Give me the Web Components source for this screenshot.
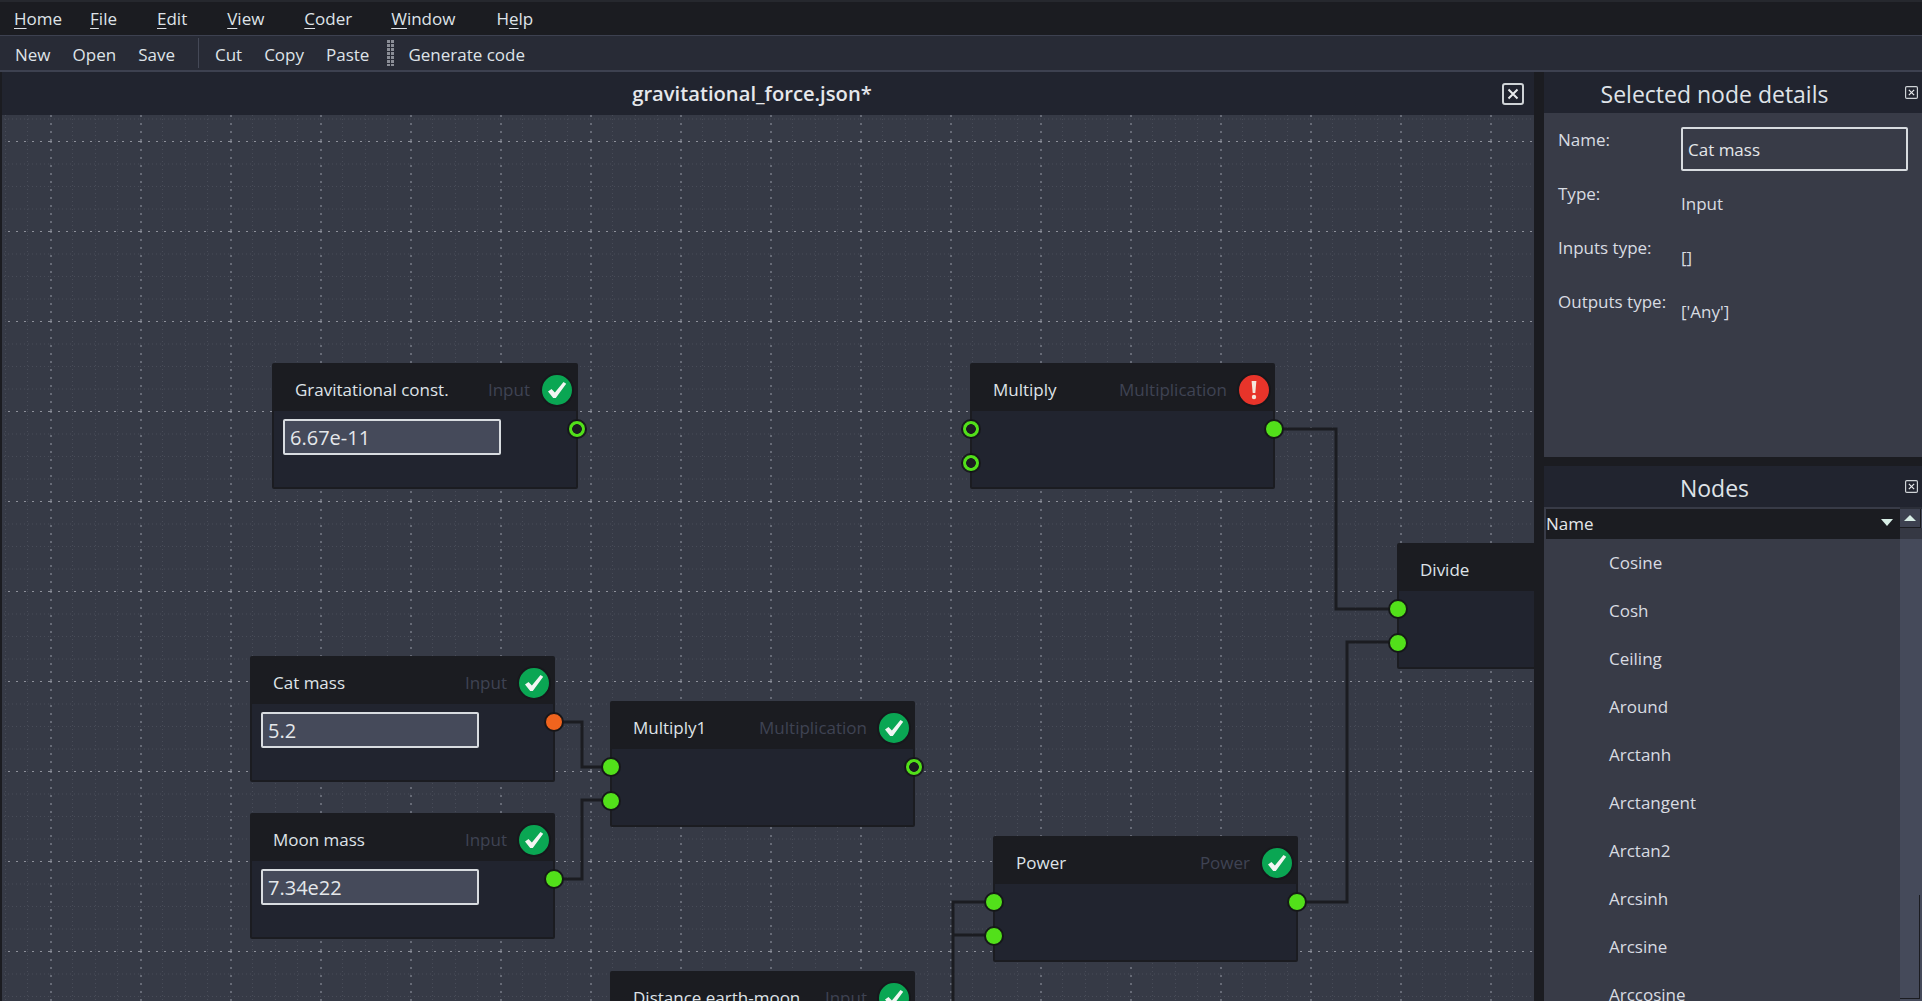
<!DOCTYPE html>
<html lang="en">
<head>
<meta charset="UTF-8">
<title>gravitational_force.json</title>
<style>
  html, body { margin: 0; height: 100%; overflow: hidden; background: #1b1c21; }
  body {
    display: flex;
    flex-direction: column;
    font-family: "Open Sans", "Liberation Sans", sans-serif;
    font-size: 17px;
    color: #dfe3e8;
  }
  u { text-underline-offset: 3px; }
</style>
</head>
<body>
  <app-menu>
    <span style="margin-right:-12px"><u>H</u>ome</span>
    <span><u>F</u>ile</span>
    <span><u>E</u>dit</span>
    <span><u>V</u>iew</span>
    <span><u>C</u>oder</span>
    <span style="margin-left:-1px"><u>W</u>indow</span>
    <span style="margin-left:1px">H<u>e</u>lp</span>
  </app-menu>
  <tool-bar>
    <span>New</span>
    <span>Open</span>
    <span>Save</span>
    <i class="sep"></i>
    <span>Cut</span>
    <span>Copy</span>
    <span>Paste</span>
    <i class="grip"></i>
    <span>Generate code</span>
  </tool-bar>

  <app-main>
    <editor-pane name="gravitational_force.json*">
      <flow-node x="270" y="248" style="width:306px" name="Gravitational const." type="Input" status="ok">
        <value-field>6.67e-11</value-field>
        <node-port side="right" row="0" kind="hollow"></node-port>
      </flow-node>
      <flow-node x="968" y="248" name="Multiply" type="Multiplication" status="error">
        <node-port side="left" row="0" kind="hollow"></node-port>
        <node-port side="left" row="1" kind="hollow"></node-port>
        <node-port side="right" row="0"></node-port>
      </flow-node>
      <flow-node x="1395" y="428" name="Divide">
        <node-port side="left" row="0"></node-port>
        <node-port side="left" row="1"></node-port>
      </flow-node>
      <flow-node x="248" y="541" name="Cat mass" type="Input" status="ok">
        <value-field>5.2</value-field>
        <node-port side="right" row="0" kind="orange"></node-port>
      </flow-node>
      <flow-node x="608" y="586" name="Multiply1" type="Multiplication" status="ok">
        <node-port side="left" row="0"></node-port>
        <node-port side="left" row="1"></node-port>
        <node-port side="right" row="0" kind="hollow"></node-port>
      </flow-node>
      <flow-node x="248" y="698" name="Moon mass" type="Input" status="ok">
        <value-field>7.34e22</value-field>
        <node-port side="right" row="0"></node-port>
      </flow-node>
      <flow-node x="991" y="721" name="Power" type="Power" status="ok">
        <node-port side="left" row="0"></node-port>
        <node-port side="left" row="1"></node-port>
        <node-port side="right" row="0"></node-port>
      </flow-node>
      <flow-node x="608" y="856" name="Distance earth-moon" type="Input" status="ok"></flow-node>
    </editor-pane>

    <side-dock>
      <dock-panel name="Selected node details" style="height:385px">
        <node-details>
          <span>Name:</span><value-field plain>Cat mass</value-field>
          <span>Type:</span><b>Input</b>
          <span>Inputs type:</span><b>[]</b>
          <span>Outputs type:</span><b>['Any']</b>
        </node-details>
      </dock-panel>
      <dock-panel name="Nodes" style="flex:1;min-height:0">
        <node-list>
          <span>Cosine</span>
          <span>Cosh</span>
          <span>Ceiling</span>
          <span>Around</span>
          <span>Arctanh</span>
          <span>Arctangent</span>
          <span>Arctan2</span>
          <span>Arcsinh</span>
          <span>Arcsine</span>
          <span>Arccosine</span>
        </node-list>
      </dock-panel>
    </side-dock>
  </app-main>

<script>
  function shadow(el, html) {
    el.attachShadow({ mode: 'open' }).innerHTML = html;
  }

  class AppMenu extends HTMLElement {
    constructor() {
      super();
      shadow(this, `<style>
        :host { display: flex; gap: 40px; align-items: center; height: 33px; padding: 0 0 0 14px;
                background: #1b1c21; border-top: 2px solid #26282e; border-bottom: 1px solid #3d4150; }
      </style><slot></slot>`);
    }
  }

  class ToolBar extends HTMLElement {
    constructor() {
      super();
      shadow(this, `<style>
        :host { display: flex; gap: 22px; align-items: center; height: 32px; padding: 2px 0 0 15px;
                background: #282b36; border-bottom: 2px solid #3d4150; }
        ::slotted(.sep) { width: 1px; height: 30px; margin: -2px -6px 0 1px; background: #454957; }
        ::slotted(.grip) { width: 8px; height: 26px; margin: -2px -9px 0 -4px;
          background: radial-gradient(circle at 1.5px 1.5px, #8b8e97 1.5px, transparent 1.6px) 0 0 / 4px 4px; }
      </style><slot></slot>`);
    }
  }

  class AppMain extends HTMLElement {
    constructor() {
      super();
      shadow(this, `<style>
        :host { display: flex; flex: 1; min-height: 0; gap: 10px; background: #1b1c21; }
      </style><slot></slot>`);
    }
  }

  class EditorPane extends HTMLElement {
    constructor() {
      super();
      shadow(this, `<style>
        :host { display: flex; flex-direction: column; width: 1532px; margin-left: 2px; min-height: 0; }
        header { display: flex; align-items: center; height: 43px; flex: none; background: #21242f; padding-right: 10px; }
        h1 { flex: 1; margin: -2px 0 0; text-align: center; font-size: 20.2px; font-weight: 600; color: #e6e8ec; }
        .canvas { position: relative; flex: 1; overflow: hidden; background: #363a46; }
        svg { position: absolute; left: 0; top: 0; width: 100%; height: 100%; }
      </style>
      <header><h1></h1><close-button size="22"></close-button></header>
      <div class="canvas">
        <svg>
          <defs>
            <pattern id="grid" width="90" height="90" patternUnits="userSpaceOnUse" patternTransform="translate(48 26)">
              <g stroke="#484c58" fill="none">
                <path d="M22.5 0V90M45.5 0V90M67.5 0V90" stroke-dasharray="1 3"/>
                <path d="M0 23H90M0 45.5H90M0 68H90" stroke-dasharray="1 3"/>
              </g>
              <path d="M1 0V90" stroke="#666a76" stroke-width="2" stroke-dasharray="2 6" fill="none"/>
              <path d="M0 .5H90" stroke="#8e919b" stroke-dasharray="2 6" fill="none"/>
            </pattern>
          </defs>
          <rect width="100%" height="100%" fill="url(#grid)"/>
          <path fill="none" stroke="#1b1c21" stroke-width="3"
            d="M1272 314H1334V494H1396M1294 787H1345V527H1396M552 607H580V652H609M552 764H580V685H609M991 787H951V886M991 820H951"/>
        </svg>
        <slot></slot>
      </div>`);
    }
    connectedCallback() {
      this.shadowRoot.querySelector('h1').textContent = this.getAttribute('name');
    }
  }

  class CloseButton extends HTMLElement {
    constructor() {
      super();
      shadow(this, `<style>
        :host { display: block; flex: none; line-height: 0; }
        svg { display: block; }
      </style><svg viewBox="0 0 22 22" fill="none">
        <rect x="1" y="1" width="20" height="20" rx="2" stroke="#cfd3d6" stroke-width="2" fill="#21242f"/>
        <path d="M6.5 6.5l9 9M15.5 6.5l-9 9" stroke="#e8eaec" stroke-width="2"/>
      </svg>`);
    }
    connectedCallback() {
      const s = this.getAttribute('size') || 13;
      const svg = this.shadowRoot.querySelector('svg');
      svg.setAttribute('width', s);
      svg.setAttribute('height', s);
    }
  }

  class FlowNode extends HTMLElement {
    constructor() {
      super();
      shadow(this, `<style>
        :host { position: absolute; display: block; box-sizing: border-box; width: 305px; height: 126px;
                background: #21242f; border: 2px solid #1b1c21; border-radius: 2px; }
        header { display: flex; align-items: center; box-sizing: border-box; height: 46px; background: #1b1c21;
                 padding: 3px 2px 0 21px; }
        .name { flex: 1; white-space: nowrap; color: #dfe3e8; }
        .type { color: #3f4353; margin-right: 10px; }
        .body { padding: 8px 0 0 9px; }
      </style>
      <header><span class="name"></span><span class="type"></span><span class="badge"></span></header>
      <div class="body"><slot></slot></div>`);
    }
    connectedCallback() {
      this.style.left = this.getAttribute('x') + 'px';
      this.style.top = this.getAttribute('y') + 'px';
      const root = this.shadowRoot;
      root.querySelector('.name').textContent = this.getAttribute('name');
      if (this.hasAttribute('type')) root.querySelector('.type').textContent = this.getAttribute('type');
      if (this.hasAttribute('status')) {
        const badge = document.createElement('status-badge');
        badge.setAttribute('status', this.getAttribute('status'));
        root.querySelector('.badge').replaceWith(badge);
      }
    }
  }

  class StatusBadge extends HTMLElement {
    constructor() {
      super();
      shadow(this, `<style>
        :host { display: block; flex: none; width: 34px; height: 34px; }
        svg { display: block; }
      </style><svg width="34" height="34" viewBox="0 0 34 34"></svg>`);
    }
    connectedCallback() {
      const svg = this.shadowRoot.querySelector('svg');
      if (this.getAttribute('status') === 'error') {
        svg.innerHTML = `<circle cx="17" cy="17" r="16" fill="#e8342a" stroke="#17181c" stroke-width="2"/>
          <path d="M14.6 8h4.8l-1.1 12h-2.6z" fill="#f4e6dc"/><circle cx="17" cy="24" r="2.2" fill="#f4e6dc"/>`;
      } else {
        svg.innerHTML = `<circle cx="17" cy="17" r="16" fill="#0aa653" stroke="#17181c" stroke-width="2"/>
          <path d="M8 18.5l3.5-2.6 3.4 3.6 8.6-10.5 2.7 1.8-10.4 14.2h-2.6z" fill="#f2f5f3"/>`;
      }
    }
  }

  class NodePort extends HTMLElement {
    constructor() {
      super();
      shadow(this, `<style>
        :host { position: absolute; display: block; box-sizing: border-box; width: 18px; height: 18px;
                border-radius: 50%; background: #52e01a; border: 1px solid #101114; box-shadow: 0 0 0 1px #17181c; }
        :host([kind="orange"]) { background: #f0641e; }
        :host([kind="hollow"]) { background: radial-gradient(circle, #1b1c21 4.5px, #52e01a 5.2px); }
      </style>`);
    }
    connectedCallback() {
      // node box has a 2px border, so offsets are from the padding edge
      const row = Number(this.getAttribute('row') || 0);
      this.style.top = (55 + row * 34) + 'px';
      if (this.getAttribute('side') === 'left') this.style.left = '-10px';
      else this.style.right = '-10px';
    }
  }

  class ValueField extends HTMLElement {
    constructor() {
      super();
      shadow(this, `<style>
        :host { display: flex; align-items: center; box-sizing: border-box; width: 218px; height: 36px;
                padding: 0 5px; background: #454a5a; border: 2px solid #d8dce0; border-radius: 2px;
                font-size: 20px; color: #e4e7ea; }
        :host([plain]) { width: 227px; height: 44px; padding-top: 1px; background: transparent; font-size: 17px; }
      </style><slot></slot>`);
    }
  }

  class SideDock extends HTMLElement {
    constructor() {
      super();
      shadow(this, `<style>
        :host { display: flex; flex-direction: column; flex: 1; min-width: 0; gap: 9px; }
      </style><slot></slot>`);
    }
  }

  class DockPanel extends HTMLElement {
    constructor() {
      super();
      shadow(this, `<style>
        :host { display: flex; flex-direction: column; background: #383b47; min-height: 0; }
        header { position: relative; flex: none; display: flex; align-items: center; justify-content: center;
                 box-sizing: border-box; height: 41px; background: #21242f; font-size: 23px; color: #dfe3e8;
                 padding: 2px 37px 0 0; }
        close-button { position: absolute; right: 4px; top: 14px; }
      </style>
      <header><span></span><close-button size="13"></close-button></header>
      <slot></slot>`);
    }
    connectedCallback() {
      this.shadowRoot.querySelector('span').textContent = this.getAttribute('name');
    }
  }

  class NodeDetails extends HTMLElement {
    constructor() {
      super();
      shadow(this, `<style>
        :host { display: grid; grid-template-columns: 123px 227px; grid-auto-rows: 44px; row-gap: 10px;
                padding: 14px 0 0 14px; color: #d8dce2; }
        ::slotted(span) { line-height: 26px; }
        ::slotted(b) { font-weight: 400; line-height: 46px; }
      </style><slot></slot>`);
    }
  }

  class NodeList extends HTMLElement {
    constructor() {
      super();
      shadow(this, `<style>
        :host { display: grid; grid-template-columns: 1fr 22px; grid-template-rows: 32px 1fr; flex: 1; min-height: 0;
                padding: 0 0 0 2px; overflow: hidden; }
        .head { display: flex; align-items: center; justify-content: space-between; margin-top: 2px;
                background: #1b1c21; padding: 0 7px 2px 0; color: #e4e7ea; }
        .head svg { margin-top: -2px; }
        .rows { grid-row: 2; min-height: 0; overflow: hidden; }
        ::slotted(span) { display: block; height: 48px; line-height: 48px; padding-left: 63px; color: #d8dce2; }
        .bar { grid-column: 2; grid-row: 1 / 3; display: flex; flex-direction: column; background: #454a5a; border-top: 2px solid #2b2e38; }
        .up { height: 18px; flex: none; display: flex; align-items: center; justify-content: center;
              background: #3d4150; border-right: 1px solid #1b1c21; border-bottom: 1px solid #1b1c21; margin-right: 1px; }
        .gap { height: 11px; flex: none; background: #353843; }
        .fill { flex: 1; }
        .thumb { height: 104px; flex: none; box-sizing: border-box; margin-right: 2px; border-right: 1px solid #1b1c21; border-bottom: 1px solid #1b1c21; margin-bottom: 2px; }
      </style>
      <div class="head"><span>Name</span>
        <svg width="12" height="7" viewBox="0 0 12 7"><path d="M0 0H12L6 7z" fill="#d8eee6"/></svg>
      </div>
      <div class="rows"><slot></slot></div>
      <div class="bar">
        <div class="up"><svg width="12" height="6" viewBox="0 0 12 6"><path d="M0 6H12L6 0z" fill="#d8eee6"/></svg></div>
        <div class="gap"></div>
        <div class="fill"></div>
        <div class="thumb"></div>
      </div>`);
    }
  }

  customElements.define('app-menu', AppMenu);
  customElements.define('tool-bar', ToolBar);
  customElements.define('app-main', AppMain);
  customElements.define('editor-pane', EditorPane);
  customElements.define('close-button', CloseButton);
  customElements.define('flow-node', FlowNode);
  customElements.define('status-badge', StatusBadge);
  customElements.define('node-port', NodePort);
  customElements.define('value-field', ValueField);
  customElements.define('side-dock', SideDock);
  customElements.define('dock-panel', DockPanel);
  customElements.define('node-details', NodeDetails);
  customElements.define('node-list', NodeList);
</script>
</body>
</html>
